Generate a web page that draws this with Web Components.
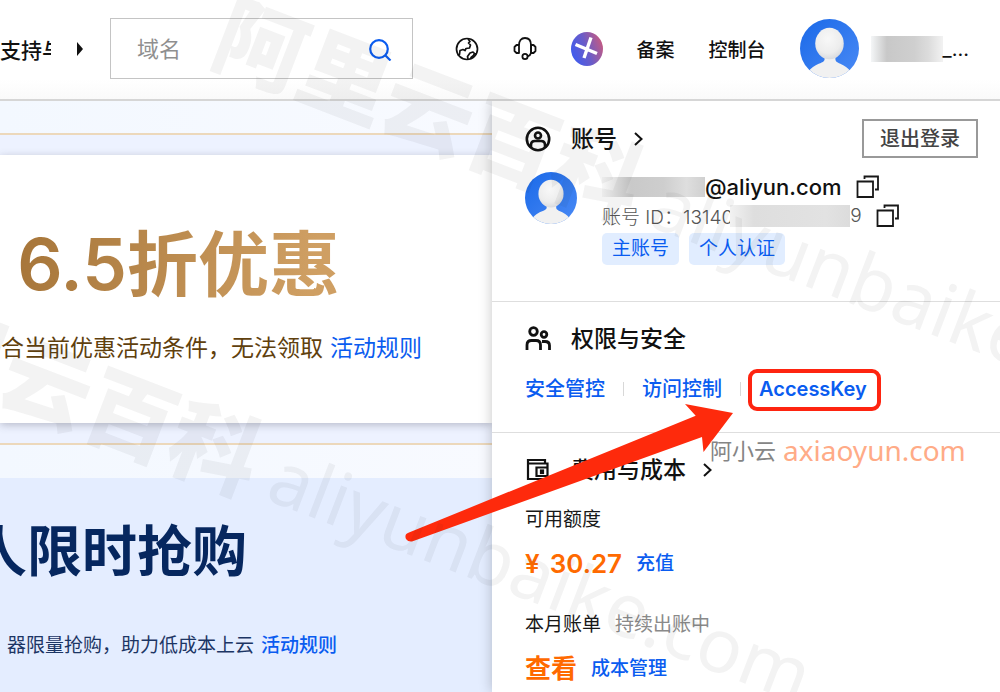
<!DOCTYPE html>
<html lang="zh-CN">
<head>
<meta charset="utf-8">
<meta name="viewport" content="width=device-width, initial-scale=1">
<title>阿里云账号中心</title>
<style>
  html, body { margin: 0; }
  body {
    font-family: Inter, "Noto Sans CJK SC", sans-serif;
    font-size: 19px;
    color: #181818;
    background: #fff;
    overflow: hidden;
  }
</style>
</head>
<body>
<cloud-page></cloud-page>

<script>
const define = (name, html) => {
  const template = document.createElement('template');
  template.innerHTML = html;
  customElements.define(name, class extends HTMLElement {
    constructor() {
      super();
      this.attachShadow({ mode: 'open' }).append(template.content.cloneNode(true));
    }
  });
};

/* Round default portrait */
define('user-avatar', `
  <style>
    :host { display: block; flex: none; width: var(--avatar-size, 52px); }
    svg { display: block; width: 100%; height: auto; }
  </style>
  <svg viewBox="0 0 60 60" role="img" aria-label="头像">
    <defs>
      <clipPath id="c"><circle cx="30" cy="30" r="30"/></clipPath>
      <linearGradient id="b" x1="0" y1="0" x2="1" y2="1"><stop offset="0" stop-color="#1a69e8"/><stop offset="1" stop-color="#4a8af5"/></linearGradient>
      <radialGradient id="h" cx=".45" cy=".35" r=".65"><stop offset="0" stop-color="#f8f8f8"/><stop offset=".7" stop-color="#ededed"/><stop offset="1" stop-color="#d9dbdf"/></radialGradient>
    </defs>
    <g clip-path="url(#c)">
      <rect width="60" height="60" fill="url(#b)"/>
      <path d="M25 36h11v5c0 3 4 4 8 6 4 2 7 5 9 9v7H7v-7c2-4 5-7 9-9 4-2 9-3 9-6z" fill="#f1f1f1"/>
      <ellipse cx="30" cy="25" rx="14.500" ry="16" fill="url(#h)"/>
    </g>
  </svg>`);

/* Copy-to-clipboard button */
define('copy-button', `
  <style>
    :host { display: block; flex: none; }
    button { display: block; padding: 0; border: 0; background: none; color: #181818; cursor: pointer; }
    svg { display: block; }
  </style>
  <button type="button" aria-label="复制">
    <svg width="24" height="24" viewBox="0 0 24 24" fill="none" stroke="currentColor" stroke-width="1.8">
      <path d="M1.500 6.500h15.500v15.500H1.500z"/><path d="M8.500 4V1.500h13.500v13h-3"/>
    </svg>
  </button>`);

/* Blurred-out private text */
define('masked-text', `
  <style>
    :host {
      display: block; flex: none; width: var(--mask-width); height: var(--mask-height, 20px);
      background: var(--mask-fill, linear-gradient(90deg, #f2f2f2, #dedede 20%, #e2e2e2 80%, #dcdcdc));
    }
  </style>`);

define('text-link', `
  <style>
    :host { display: inline-block; }
    a { color: #0a5cf0; text-decoration: none; }
  </style>
  <a href="#"><slot></slot></a>`);

define('site-header', `
  <style>
    :host {
      display: flex; align-items: center; box-sizing: border-box; height: 101px;
      padding: 0 31px 2px 0; border-bottom: 2px solid #d6d6d6; background: linear-gradient(#fff 80%, #fafafa);
      white-space: nowrap; font-weight: 500; color: #111;
    }
    a { color: inherit; text-decoration: none; }
    .nav { width: 51px; overflow: hidden; flex: none; font-size: 21px; }
    .caret { flex: none; margin: 0 27px 0 26px; padding: 0; border: 0; background: none; display: block; }
    form { flex: 1; display: flex; align-items: center; box-sizing: border-box; min-width: 0; height: 61px; padding: 0 20px 0 26px; border: 1px solid #c4c4c4; }
    input { flex: 1; min-width: 0; padding: 0; border: 0; outline: 0; background: none; font: 400 22px Inter, "Noto Sans CJK SC", sans-serif; color: #333; }
    input::placeholder { color: #8f8f8f; opacity: 1; }
    button { padding: 0; border: 0; background: none; cursor: pointer; }
    svg { display: block; }
    .tools { flex: none; display: flex; align-items: center; gap: 34px; margin-left: 42px; }
    .user { display: flex; align-items: center; gap: 12px; --avatar-size: 59px; }
    .name { display: flex; align-items: center; --mask-width: 72px; --mask-height: 26px; --mask-fill: linear-gradient(90deg, #f4f6f7, #c8c8c8 22%, #cfcfcf 60%, #dcdcdc 80%, #f2f2f2); }
    .name span { font-weight: 400; font-size: 20px; }
  </style>
  <a class="nav" href="#">支持与</a>
  <button class="caret" type="button" aria-label="更多"><svg width="6" height="14" viewBox="0 0 6 14"><path d="M0 0l6 7-6 7z" fill="#111"/></svg></button>
  <form role="search">
    <input type="text" aria-label="搜索" placeholder="域名">
    <button type="button" aria-label="搜索"><svg width="24" height="24" viewBox="0 0 24 24" fill="none" stroke="#0a5cf0" stroke-width="2.200"><circle cx="11" cy="12" r="8.800"/><path d="M17 18l5.500 5.500"/></svg></button>
  </form>
  <div class="tools">
    <a href="#" aria-label="语言"><svg width="24" height="24" viewBox="0 0 24 24" fill="none" stroke="#111" stroke-width="1.700" stroke-linejoin="round"><circle cx="12" cy="12" r="10.500"/><path d="M13 2l2 2.500-1.500 1.500 2 2-1 3-3.500.5-1 2-2-1-3 1-.5 4-2 .5M13 22l-.5-2.500L15 16l3-1 1.500 1.500 2 .5M15.500 21l3-2.500 1-2"/></svg></a>
    <a href="#" aria-label="客服"><svg width="24" height="24" viewBox="0 0 24 24" fill="none" stroke="#111" stroke-width="1.800" stroke-linejoin="round"><path d="M6 16H3.500L1.500 14v-4l2-2H6zM18 8h2.500l2 2v4l-2 2H18z"/><path d="M6 8c0-4 2-7 6-7s6 3 6 7v8c-.5 2-1.500 3-3.500 3.500"/><circle cx="12" cy="19.500" r="2.600"/></svg></a>
    <a href="#" aria-label="助手"><svg width="32" height="34" viewBox="0 0 32 34"><defs><linearGradient id="g" x1="0" x2="1" y1=".7" y2=".3"><stop offset="0" stop-color="#3d5cf0"/><stop offset=".5" stop-color="#6b5cc8"/><stop offset="1" stop-color="#c75a80"/></linearGradient></defs><ellipse cx="16" cy="17" rx="16" ry="17" fill="url(#g)"/><path d="M4.500 12.500L26 21.500M20 5.500L13 26" stroke="#fff" stroke-width="3.400"/></svg></a>
    <a href="#">备案</a>
    <a href="#">控制台</a>
    <div class="user">
      <user-avatar></user-avatar>
      <div class="name"><masked-text></masked-text><span>_...</span></div>
    </div>
  </div>`);

/* Promotion: heading and a note that run in from the left edge */
define('promo-block', `
  <style>
    :host { display: grid; overflow: hidden; justify-items: end; justify-content: end; white-space: nowrap; }
  </style>
  <slot name="title"></slot>
  <slot name="note"></slot>`);

define('promo-column', `
  <style>
    :host { display: flex; flex-direction: column; min-width: 0; background: linear-gradient(90deg, #f3f8ff, #f8faff); }
    .band { margin: 32px 0 33px; padding: 20px 0; border: solid #ecd8bb; border-width: 2px 0; background: #edf2ff; }
    h1, h2, p { margin: 0; }
    h2 { font-weight: 600; }
    .gold { padding: 67px 70px 59px 0; row-gap: 26px; background: #fff; box-shadow: 0 2px 8px rgba(60, 60, 80, .3); }
    .gold h2 { margin-right: 82px; font-size: 71px; line-height: 84px; color: transparent; background: linear-gradient(100deg, #a67539, #cf9f63 90%); background-clip: text; -webkit-background-clip: text; }
    .gold p { font-size: 23px; line-height: 32px; color: #60400d; }
    .blue { flex: 1; align-content: start; padding: 41px 155px 0 0; row-gap: 49px; background: #e4edff; }
    .blue h2 { margin-right: 90px; font-size: 55px; line-height: 64px; color: #06275f; }
    .blue p { font-size: 19px; line-height: 28px; color: #1c3564; }
    .blue text-link { font-weight: 500; }
    p text-link { margin-left: 7px; }
  </style>
  <div class="band">
    <promo-block class="gold">
      <h2 slot="title">6.5折优惠</h2>
      <p slot="note">符合当前优惠活动条件，无法领取<text-link>活动规则</text-link></p>
    </promo-block>
  </div>
  <promo-block class="blue">
    <h2 slot="title">人限时抢购</h2>
    <p slot="note">器限量抢购，助力低成本上云<text-link>活动规则</text-link></p>
  </promo-block>`);

/* One section of the account panel: icon, title, optional chevron and action, then content */
define('panel-section', `
  <style>
    :host { display: block; padding: 21px 22px 29px 33px; border-bottom: 1px solid #dedede; }
    header { display: flex; align-items: center; height: var(--head-height, 32px); margin-bottom: var(--head-gap, 20px); }
    ::slotted([slot=icon]) { flex: none; margin-right: 20px; }
    h3 { margin: 0; font-size: 23px; line-height: 32px; font-weight: 500; color: #111; }
    ::slotted([slot=more]) { margin-left: 17px; }
    ::slotted([slot=action]) { margin-left: auto; }
  </style>
  <header>
    <slot name="icon"></slot>
    <h3><slot name="title"></slot></h3>
    <slot name="more"></slot>
    <slot name="action"></slot>
  </header>
  <slot></slot>`);

define('account-panel', `
  <style>
    :host { display: block; position: relative; min-width: 0; background: #fff; box-shadow: -1px 0 12px rgba(0, 0, 0, .2); clip-path: inset(0 0 0 -20px); white-space: nowrap; }
    svg { display: block; }
    .account { padding-top: 18px; padding-bottom: 36px; --head-height: 39px; --head-gap: 14px; }
    .logout { box-sizing: border-box; height: 39px; padding: 0 16px; border: 2px solid #999; background: #fff; font: 500 20px/32px Inter, "Noto Sans CJK SC", sans-serif; color: #444; cursor: pointer; }
    .more { padding: 0; border: 0; background: none; }
    .profile { display: flex; gap: 25px; }
    .row { display: flex; align-items: center; height: 29px; }
    .mail { font-size: 22px; font-weight: 500; color: #111; --mask-width: 103px; --mask-fill: linear-gradient(90deg, #f8f8f8, #c9c9c9 28%, #cecece 60%, #dedede 82%, #d0d0d0); }
    .id { color: #555; font-weight: 300; --mask-width: 120px; --mask-height: 22px; }
    .id masked-text { margin-left: -3px; z-index: 1; }
    copy-button { margin-left: 14px; }
    .tags { display: flex; gap: 10px; margin-top: 3px; color: #0a5cf0; }
    .tags span { padding: 0 10px; border-radius: 5px; background: #e1edff; line-height: 32px; }
    .links { display: flex; align-items: center; gap: 18px; font-size: 20px; line-height: 28px; font-weight: 500; }
    .links i { width: 1px; height: 14px; background: #d8d8d8; }
    .key { position: relative; font-weight: 600; }
    .key::after { content: ""; position: absolute; inset: -6px -14px -8px -11px; border: 4px solid #fe2410; border-radius: 9px; pointer-events: none; }
    .cost { border: 0; padding-bottom: 0; }
    .label, .value { display: flex; align-items: center; gap: 14px; }
    .label { line-height: 28px; }
    .label small { font-size: 19px; color: #8a8a8a; }
    .value { margin: 14px 0 31px; line-height: 32px; font-weight: 500; }
    .value b { display: flex; gap: 10px; font-size: 26px; font-weight: 600; color: #ff6a00; }
    .value:last-child { margin-bottom: 0; }
  </style>
  <panel-section class="account">
    <svg slot="icon" width="26" height="26" viewBox="0 0 26 26" fill="none" stroke="#111" stroke-width="2.600"><circle cx="13" cy="13" r="11.200"/><circle cx="13" cy="9.500" r="3"/><path d="M6 21.500v-2.500c0-3 2-4 4-4h6c2 0 4 1 4 4v2.500"/></svg>
    <span slot="title">账号</span>
    <button class="more" slot="more" type="button" aria-label="账号详情"><svg width="9" height="14" viewBox="0 0 9 14" fill="none" stroke="#111" stroke-width="2"><path d="M1 1l6.500 6L1 13"/></svg></button>
    <button class="logout" slot="action" type="button">退出登录</button>
    <div class="profile">
      <user-avatar></user-avatar>
      <div>
        <div class="row mail"><masked-text></masked-text><span>@aliyun.com</span><copy-button></copy-button></div>
        <div class="row id"><span>账号 ID：13140</span><masked-text></masked-text><span>9</span><copy-button></copy-button></div>
        <div class="tags"><span>主账号</span><span>个人认证</span></div>
      </div>
    </div>
  </panel-section>
  <panel-section>
    <svg slot="icon" width="26" height="26" viewBox="0 0 26 26" fill="none" stroke="#111" stroke-width="2.800"><circle cx="8.500" cy="5.500" r="3.800"/><circle cx="19" cy="8.500" r="2.800"/><path d="M2 24v-5c0-3 2-4.500 4.500-4.500H11c3 0 4.500 1.500 4.500 4.500v5M17 15.500h3c3 0 4.500 1 4.500 4V24"/></svg>
    <span slot="title">权限与安全</span>
    <div class="links">
      <text-link>安全管控</text-link><i></i><text-link>访问控制</text-link><i></i><text-link class="key">AccessKey</text-link>
    </div>
  </panel-section>
  <panel-section class="cost">
    <svg slot="icon" width="26" height="26" viewBox="0 0 26 26" fill="none" stroke="#111" stroke-width="2.200"><path d="M22.500 11V6.500H3V3h17v3.500M3 5v17h19.500v-3M11.500 10.500h11V19h-11z"/><path d="M16 13.500h2v2.500h-2z"/></svg>
    <span slot="title">费用与成本</span>
    <button class="more" slot="more" type="button" aria-label="费用详情"><svg width="9" height="14" viewBox="0 0 9 14" fill="none" stroke="#111" stroke-width="2"><path d="M1 1l6.500 6L1 13"/></svg></button>
    <div class="label">可用额度</div>
    <div class="value"><b><span>¥</span><span>30.27</span></b><text-link>充值</text-link></div>
    <div class="label">本月账单<small>持续出账中</small></div>
    <div class="value"><b>查看</b><text-link>成本管理</text-link></div>
  </panel-section>`);

/* Red pointer drawn over the page towards the AccessKey link */
define('guide-arrow', `
  <style>
    :host { position: absolute; left: 405px; top: 403px; pointer-events: none; }
    svg { display: block; }
  </style>
  <svg width="330" height="140" viewBox="405 403 330 140"><path d="M409 532.500L695.700 415.700 685 404 733 413 703.500 452 702 437 412 541.500Q408 542 406 539 404 534 409 532.500z" fill="#fe2a0c"/></svg>`);

define('site-mark', `
  <style>
    :host { position: absolute; left: 710px; top: 433px; display: flex; align-items: center; gap: 7px; line-height: 34px; white-space: nowrap; pointer-events: none; font-family: "Noto Sans", "Noto Sans CJK SC", sans-serif; }
    .cn { font-size: 22px; color: #858585; text-shadow: 0 0 2px #fff, 0 0 2px #fff; }
    .en { font-size: 28px; color: #ffab87; }
  </style>
  <span class="cn">阿小云</span><span class="en">axiaoyun.com</span>`);

/* Tilted repeating watermark; origin is the left end of its middle line */
define('tilted-mark', `
  <style>
    :host { position: absolute; display: flex; align-items: center; height: 100px; gap: 18px; transform: rotate(21deg); transform-origin: 0 50%; white-space: nowrap; pointer-events: none; color: rgba(40, 40, 40, .055); line-height: 100px; font-family: "Noto Sans", "Noto Sans CJK SC", sans-serif; }
    .cn { margin-bottom: 12px; font: 900 90px/100px "Noto Sans CJK SC", sans-serif; }
    .en { font-size: 75px; }
  </style>
  <span class="cn">阿里云百科</span><span class="en">aliyunbaike.com</span>`);

define('cloud-page', `
  <style>
    :host { display: flex; flex-direction: column; position: relative; min-height: 100vh; overflow: hidden; }
    main { flex: 1; display: grid; grid-template-columns: minmax(0, 492fr) minmax(0, 508fr); }
    .first { left: 219px; top: -20px; }
    .second { left: -163px; top: 254px; }
  </style>
  <site-header></site-header>
  <main>
    <promo-column></promo-column>
    <account-panel></account-panel>
  </main>
  <guide-arrow></guide-arrow>
  <site-mark></site-mark>
  <tilted-mark class="first" aria-hidden="true"></tilted-mark>
  <tilted-mark class="second" aria-hidden="true"></tilted-mark>`);
</script>
</body>
</html>
